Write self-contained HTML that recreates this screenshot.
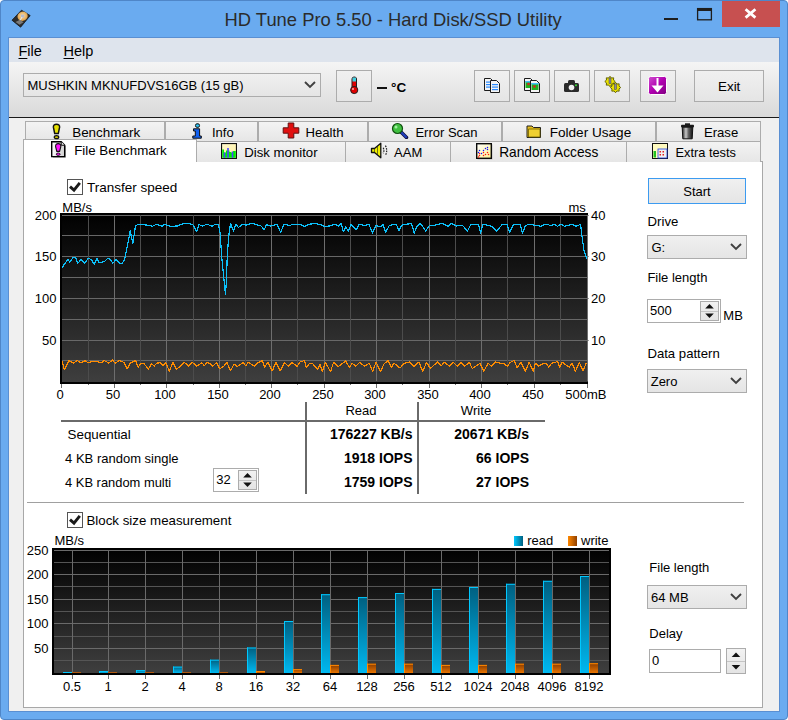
<!DOCTYPE html><html><head><meta charset="utf-8"><style>
html,body{margin:0;padding:0;}
body{width:788px;height:720px;position:relative;overflow:hidden;background:#fff;font-family:"Liberation Sans", sans-serif;}
u{text-decoration:underline;text-underline-offset:2px;}
</style></head><body>
<div style="position:absolute;left:0;top:0;width:786px;height:718px;background:#6aabf0;border:1px solid #4f86c8;border-radius:4px;"></div><div style="position:absolute;left:8px;top:37px;width:772px;height:675px;background:#5a8fd2;"></div><div style="position:absolute;left:9px;top:38px;width:770px;height:673px;background:#f0f0f0;"></div><div style="position:absolute;top:11px;font-size:18.4px;line-height:18.4px;color:#2b2b2b;white-space:nowrap;left:224.50px;">HD Tune Pro 5.50 - Hard Disk/SSD Utility</div><div style="position:absolute;left:722px;top:1px;width:58px;height:26px;background:#c75050;"></div><svg style="position:absolute;left:722px;top:1px;" width="58" height="26" viewBox="0 0 58 26"><path d="M23.6 8.2 L33.4 16.6 M33.4 8.2 L23.6 16.6" stroke="#fff" stroke-width="2.8" stroke-linecap="butt"/></svg><div style="position:absolute;left:664px;top:18px;width:14px;height:2px;background:#1e1e1e;"></div><svg style="position:absolute;left:696px;top:7px;" width="18" height="14" viewBox="0 0 18 14"><rect x="1.6" y="1.6" width="13.8" height="11.2" fill="none" stroke="#1e1e1e" stroke-width="1.3"/><rect x="1" y="1" width="15" height="3" fill="#1e1e1e"/></svg><svg style="position:absolute;left:0px;top:0px;" width="40" height="37" viewBox="0 0 40 37"><defs><radialGradient id="pl" cx="0.5" cy="0.45" r="0.6"><stop offset="0" stop-color="#ffe0a8"/><stop offset="1" stop-color="#d89840"/></radialGradient></defs>
<polygon points="12,20.2 21.5,10.2 30.2,15.6 20.6,27.2" fill="#2c2c2c" stroke="#151515" stroke-width="0.8"/>
<ellipse cx="22.6" cy="16.2" rx="5.2" ry="4.6" transform="rotate(-20 22.6 16.2)" fill="url(#pl)"/>
<rect x="21" y="14.6" width="3.2" height="3" fill="#b8bccc"/>
<path d="M22 17 L19.4 21.8" stroke="#e8e8e8" stroke-width="1.1"/>
<path d="M15.5 22 L20 19.8 L23.5 22.3 L19.5 24.8 Z" fill="#7a7a7a"/></svg><div style="position:absolute;left:9px;top:38px;width:770px;height:24px;background:#dee4ed;"></div><div style="position:absolute;top:44px;font-size:14.5px;line-height:14.5px;color:#000;white-space:nowrap;left:18.50px;"><u>F</u>ile</div><div style="position:absolute;top:44px;font-size:14.5px;line-height:14.5px;color:#000;white-space:nowrap;left:63.50px;"><u>H</u>elp</div><div style="position:absolute;left:9px;top:62px;width:770px;height:55px;background:linear-gradient(#f5f5f5,#d9d9d9);"></div><div style="position:absolute;left:9px;top:117px;width:770px;height:1px;background:#1a1a1a;"></div><div style="position:absolute;left:23px;top:73px;width:298px;height:24px;box-sizing:border-box;border:1px solid #acacac;background:linear-gradient(#f0f0f0,#e5e5e5);"></div><div style="position:absolute;top:79px;font-size:13px;line-height:13px;color:#000;white-space:nowrap;left:27.50px;">MUSHKIN MKNUFDVS16GB (15 gB)</div><svg style="position:absolute;left:304px;top:80.0px;" width="12" height="10" viewBox="0 0 12 10"><path d="M1 2 L6 7 L11 2" fill="none" stroke="#404040" stroke-width="1.9"/></svg><div style="position:absolute;left:336px;top:70px;width:36px;height:32px;box-sizing:border-box;border:1px solid #acacac;background:linear-gradient(#f0f0f0,#e5e5e5);"></div><svg style="position:absolute;left:349px;top:76px;" width="10" height="19" viewBox="0 0 10 19"><rect x="3" y="1" width="4.5" height="12" rx="2" fill="#e00000" stroke="#202020" stroke-width="1"/>
<rect x="3.5" y="1.5" width="3.5" height="4" fill="#40d0e0"/>
<circle cx="5.2" cy="14" r="3.6" fill="#e00000" stroke="#202020" stroke-width="1"/><circle cx="4" cy="13" r="1" fill="#ffb0b0"/></svg><div style="position:absolute;left:377px;top:87px;width:10px;height:2px;background:#111;"></div><div style="position:absolute;top:81px;font-size:13.5px;line-height:13.5px;color:#000;white-space:nowrap;font-weight:bold;left:391.00px;">&deg;C</div><div style="position:absolute;left:474px;top:70px;width:36px;height:32px;box-sizing:border-box;border:1px solid #acacac;background:linear-gradient(#f0f0f0,#e5e5e5);"></div><div style="position:absolute;left:514px;top:70px;width:36px;height:32px;box-sizing:border-box;border:1px solid #acacac;background:linear-gradient(#f0f0f0,#e5e5e5);"></div><div style="position:absolute;left:554px;top:70px;width:36px;height:32px;box-sizing:border-box;border:1px solid #acacac;background:linear-gradient(#f0f0f0,#e5e5e5);"></div><div style="position:absolute;left:594px;top:70px;width:36px;height:32px;box-sizing:border-box;border:1px solid #acacac;background:linear-gradient(#f0f0f0,#e5e5e5);"></div><div style="position:absolute;left:640px;top:70px;width:36px;height:32px;box-sizing:border-box;border:1px solid #acacac;background:linear-gradient(#f0f0f0,#e5e5e5);"></div><div style="position:absolute;left:694px;top:70px;width:70px;height:32px;box-sizing:border-box;border:1px solid #acacac;background:linear-gradient(#f0f0f0,#e5e5e5);"></div><div style="position:absolute;top:80px;font-size:13.4px;line-height:13.4px;color:#000;white-space:nowrap;left:529.20px;width:400px;text-align:center;">Exit</div><svg style="position:absolute;left:483px;top:77px;" width="18" height="17" viewBox="0 0 18 17"><g transform="translate(1,1)"><path d="M0.5 0.5 H6.5 L9.5 3.5 V12.5 H0.5 Z" fill="#f4f4f4" stroke="#1a1a1a"/><rect x="2" y="3.5" width="5" height="1.2" fill="#2a8aff"/><rect x="2" y="6" width="5" height="1.2" fill="#2a8aff"/><rect x="2" y="8.5" width="5" height="1.2" fill="#2a8aff"/></g><g transform="translate(7,3)"><path d="M0.5 0.5 H6.5 L9.5 3.5 V12.5 H0.5 Z" fill="#f4f4f4" stroke="#1a1a1a"/><rect x="2" y="4" width="6" height="1.2" fill="#2a8aff"/><rect x="2" y="6.5" width="6" height="1.2" fill="#2a8aff"/><rect x="2" y="9" width="6" height="1.2" fill="#2a8aff"/></g></svg><svg style="position:absolute;left:523px;top:77px;" width="18" height="17" viewBox="0 0 18 17"><g transform="translate(1,1)"><path d="M0.5 0.5 H6.5 L9.5 3.5 V12.5 H0.5 Z" fill="#f4f4f4" stroke="#1a1a1a"/><rect x="1.5" y="3" width="6" height="7" fill="#20b020"/><rect x="1.5" y="3" width="6" height="1.5" fill="#40c0ff"/><circle cx="4.5" cy="6" r="1.3" fill="#e02020"/></g><g transform="translate(7,3)"><path d="M0.5 0.5 H6.5 L9.5 3.5 V12.5 H0.5 Z" fill="#f4f4f4" stroke="#1a1a1a"/><rect x="1.5" y="3" width="7" height="7" fill="#20b020"/><rect x="1.5" y="3" width="7" height="1.5" fill="#40c0ff"/><circle cx="4.5" cy="6.5" r="1.3" fill="#e02020"/></g></svg><svg style="position:absolute;left:563px;top:78px;" width="18" height="16" viewBox="0 0 18 16"><rect x="1" y="5" width="15" height="9" rx="1.5" fill="#2a2a2a"/><rect x="5" y="2" width="7" height="4" rx="1.5" fill="#2a2a2a"/><circle cx="8.5" cy="9.5" r="2.8" fill="#f0f0f0"/><circle cx="13" cy="7.2" r="1" fill="#30e030"/></svg><svg style="position:absolute;left:603px;top:75px;" width="20" height="20" viewBox="0 0 20 20"><g fill="#e8e000" stroke="#5a5a00" stroke-width="0.9"><polygon points="12.20,6.50 10.51,7.95 10.68,10.18 8.45,10.01 7.00,11.70 5.55,10.01 3.32,10.18 3.49,7.95 1.80,6.50 3.49,5.05 3.32,2.82 5.55,2.99 7.00,1.30 8.45,2.99 10.68,2.82 10.51,5.05"/><polygon points="17.70,12.50 16.01,13.95 16.18,16.18 13.95,16.01 12.50,17.70 11.05,16.01 8.82,16.18 8.99,13.95 7.30,12.50 8.99,11.05 8.82,8.82 11.05,8.99 12.50,7.30 13.95,8.99 16.18,8.82 16.01,11.05"/></g><rect x="6" y="3" width="2" height="5.5" fill="#8a8aa0" stroke="#444" stroke-width="0.5"/><rect x="11.5" y="9" width="2" height="5.5" fill="#8a8aa0" stroke="#444" stroke-width="0.5"/></svg><svg style="position:absolute;left:647.5px;top:75.5px;" width="19" height="19" viewBox="0 0 19 19"><defs><linearGradient id="pg" x1="0" y1="0" x2="1" y2="1"><stop offset="0" stop-color="#d050d0"/><stop offset="0.5" stop-color="#b000b0"/><stop offset="1" stop-color="#800080"/></linearGradient></defs>
<rect x="0.5" y="0.5" width="18" height="18" rx="2" fill="url(#pg)" stroke="#fff" stroke-width="1"/><rect x="8.5" y="2" width="2" height="11" fill="#fff"/><path d="M3.5 9.5 H15.5 L9.5 16.5 Z" fill="#fff"/></svg><div style="position:absolute;left:25px;top:121px;width:140px;height:20px;box-sizing:border-box;border:1px solid #acacac;border-bottom:none;background:linear-gradient(#f3f3f3,#e6e6e6);"></div><div style="position:absolute;top:126px;font-size:13.44px;line-height:13.44px;color:#000;white-space:nowrap;left:72.20px;">Benchmark</div><div style="position:absolute;left:165px;top:121px;width:93px;height:20px;box-sizing:border-box;border:1px solid #acacac;border-bottom:none;background:linear-gradient(#f3f3f3,#e6e6e6);"></div><div style="position:absolute;top:126px;font-size:13px;line-height:13px;color:#000;white-space:nowrap;left:212.00px;">Info</div><div style="position:absolute;left:258px;top:121px;width:110px;height:20px;box-sizing:border-box;border:1px solid #acacac;border-bottom:none;background:linear-gradient(#f3f3f3,#e6e6e6);"></div><div style="position:absolute;top:126px;font-size:13.14px;line-height:13.14px;color:#000;white-space:nowrap;left:305.50px;">Health</div><div style="position:absolute;left:368px;top:121px;width:134px;height:20px;box-sizing:border-box;border:1px solid #acacac;border-bottom:none;background:linear-gradient(#f3f3f3,#e6e6e6);"></div><div style="position:absolute;top:126px;font-size:13.0px;line-height:13.0px;color:#000;white-space:nowrap;left:415.40px;">Error Scan</div><div style="position:absolute;left:502px;top:121px;width:154px;height:20px;box-sizing:border-box;border:1px solid #acacac;border-bottom:none;background:linear-gradient(#f3f3f3,#e6e6e6);"></div><div style="position:absolute;top:126px;font-size:13.59px;line-height:13.59px;color:#000;white-space:nowrap;left:549.70px;">Folder Usage</div><div style="position:absolute;left:656px;top:121px;width:105px;height:20px;box-sizing:border-box;border:1px solid #acacac;border-bottom:none;background:linear-gradient(#f3f3f3,#e6e6e6);"></div><div style="position:absolute;top:126px;font-size:13.13px;line-height:13.13px;color:#000;white-space:nowrap;left:703.90px;">Erase</div><div style="position:absolute;left:23px;top:161px;width:740px;height:547px;box-sizing:border-box;border:1px solid #a8a8a8;background:#fff;"></div><div style="position:absolute;left:196px;top:141px;width:150px;height:21px;box-sizing:border-box;border:1px solid #acacac;border-bottom:none;background:linear-gradient(#f3f3f3,#e6e6e6);"></div><div style="position:absolute;top:146px;font-size:13.19px;line-height:13.19px;color:#000;white-space:nowrap;left:244.30px;">Disk monitor</div><div style="position:absolute;left:345px;top:141px;width:106px;height:21px;box-sizing:border-box;border:1px solid #acacac;border-bottom:none;background:linear-gradient(#f3f3f3,#e6e6e6);"></div><div style="position:absolute;top:146px;font-size:13.0px;line-height:13.0px;color:#000;white-space:nowrap;left:394.10px;">AAM</div><div style="position:absolute;left:450px;top:141px;width:177px;height:21px;box-sizing:border-box;border:1px solid #acacac;border-bottom:none;background:linear-gradient(#f3f3f3,#e6e6e6);"></div><div style="position:absolute;top:146px;font-size:13.73px;line-height:13.73px;color:#000;white-space:nowrap;left:499.20px;">Random Access</div><div style="position:absolute;left:626px;top:141px;width:135px;height:21px;box-sizing:border-box;border:1px solid #acacac;border-bottom:none;background:linear-gradient(#f3f3f3,#e6e6e6);"></div><div style="position:absolute;top:147px;font-size:12.8px;line-height:12.8px;color:#000;white-space:nowrap;left:675.50px;">Extra tests</div><div style="position:absolute;left:23px;top:139px;width:174px;height:23px;box-sizing:border-box;border:1px solid #acacac;border-bottom:none;background:#fff;"></div><div style="position:absolute;top:144px;font-size:13.34px;line-height:13.34px;color:#000;white-space:nowrap;left:74.20px;">File Benchmark</div><svg style="position:absolute;left:52px;top:122.5px;" width="9" height="17" viewBox="0 0 9 17"><path d="M4.5 1.2 C2.4 1.2 1.2 2.3 1.4 4.2 L2.7 10.6 H6.3 L7.6 4.2 C7.8 2.3 6.6 1.2 4.5 1.2 Z" fill="#e6e000" stroke="#111" stroke-width="1.5"/><ellipse cx="4.5" cy="14.2" rx="2.2" ry="1.5" fill="#c8c000" stroke="#111" stroke-width="1.3"/></svg><svg style="position:absolute;left:192px;top:123px;" width="10" height="16" viewBox="0 0 10 16"><rect x="3.5" y="0.8" width="4" height="3.5" rx="1.5" fill="#30c8f8" stroke="#111" stroke-width="1"/><path d="M1.5 5.8 H7.6 V13 H9.3 V15.2 H0.8 V13 H3.3 V8 H1.5 Z" fill="#1060f0" stroke="#111" stroke-width="1"/></svg><svg style="position:absolute;left:282px;top:122px;" width="18" height="17" viewBox="0 0 18 17"><path d="M6.2 1 H11.8 V5.8 H16.8 V11.2 H11.8 V16 H6.2 V11.2 H1.2 V5.8 H6.2 Z" fill="#e01010" stroke="#601010" stroke-width="1"/></svg><svg style="position:absolute;left:391px;top:122px;" width="18" height="17" viewBox="0 0 18 17"><path d="M10 10 L15.5 15.5" stroke="#101040" stroke-width="3.5" stroke-linecap="round"/><path d="M10 10 L15 15" stroke="#2040c0" stroke-width="2" stroke-linecap="round"/><circle cx="6.5" cy="6.5" r="5" fill="#40c040" stroke="#105010" stroke-width="1.2"/><circle cx="5" cy="5" r="1.5" fill="#a0f0a0"/></svg><svg style="position:absolute;left:526px;top:123px;" width="16" height="16" viewBox="0 0 16 16"><path d="M1 3 H6 L7.5 4.5 H14.5 V14.5 H1 Z" fill="#e8c020" stroke="#202020" stroke-width="1"/><path d="M2.5 6 H14 V14 H2.5 Z" fill="#f0d030" stroke="#706000" stroke-width="0.8"/></svg><svg style="position:absolute;left:680px;top:123px;" width="15" height="17" viewBox="0 0 15 17"><defs><linearGradient id="tg" x1="0" y1="0" x2="1" y2="0"><stop offset="0" stop-color="#202020"/><stop offset="0.35" stop-color="#c8c8c8"/><stop offset="0.6" stop-color="#606060"/><stop offset="1" stop-color="#101010"/></linearGradient></defs><rect x="1" y="1.8" width="13" height="2.6" rx="0.8" fill="#1a1a1a"/><rect x="5" y="0.3" width="5" height="2" fill="#1a1a1a"/><path d="M2.2 4.2 H12.8 L12.2 15.8 H2.8 Z" fill="url(#tg)" stroke="#111" stroke-width="1"/></svg><svg style="position:absolute;left:50px;top:140px;" width="17" height="19" viewBox="0 0 17 19"><defs><linearGradient id="dg" x1="0" y1="0" x2="1" y2="0"><stop offset="0" stop-color="#fcfcfc"/><stop offset="1" stop-color="#d0d0d0"/></linearGradient></defs><path d="M2.8 2.8 H12.3 L15.8 6.3 V17.8 H2.8 Z" fill="#000" opacity="0.35"/><path d="M1.7 1.7 H11.2 L14.7 5.2 V16.6 H1.7 Z" fill="url(#dg)" stroke="#000" stroke-width="1.4" stroke-linejoin="miter"/><path d="M11.2 1.7 V5.2 H14.7" fill="#fff" stroke="#000" stroke-width="1"/><path d="M8.2 3.6 C6.4 3.6 5.5 4.8 5.6 6.6 L6.8 11.4 H9.6 L10.8 6.6 C10.9 4.8 10 3.6 8.2 3.6 Z" fill="#ff10ff" stroke="#111" stroke-width="1.1"/><ellipse cx="8.2" cy="14.2" rx="1.9" ry="1.2" fill="#ff10ff" stroke="#111" stroke-width="0.9"/></svg><svg style="position:absolute;left:221px;top:143px;" width="16" height="16" viewBox="0 0 16 16"><defs><linearGradient id="yb" x1="0" y1="0" x2="1" y2="1"><stop offset="0" stop-color="#fffad0"/><stop offset="1" stop-color="#fff0a0"/></linearGradient></defs><rect x="0.5" y="0.5" width="15" height="15" fill="url(#yb)" stroke="#111" stroke-width="1.2"/><path d="M1.2 14.8 V6.5 H3 V9.5 H5 V7.5 H8.5 V9 H10 V14.8 Z" fill="#00f000"/><path d="M10 14.8 V9.5 H12 V8 H14.8 V14.8 Z" fill="#00f000"/><path d="M3.5 14.8 V9.5 M7 14.8 V5 M11.5 14.8 V8.5" stroke="#4848ff" stroke-width="1.6"/></svg><svg style="position:absolute;left:370px;top:142px;" width="19" height="17" viewBox="0 0 19 17"><path d="M1.5 6.5 H4.5 L10.8 1.2 V15.8 L4.5 10.5 H1.5 Z" fill="#f0f000" stroke="#111" stroke-width="1.3" stroke-linejoin="round"/><path d="M4.5 6.5 V10.5 M7.5 4 V13" stroke="#222" stroke-width="0.6"/><path d="M13.2 5.8 Q14.6 8.5 13.2 11.2 M15.4 3.6 Q18 8.5 15.4 13.4" fill="none" stroke="#222" stroke-width="1.2" stroke-dasharray="1.6 1"/></svg><svg style="position:absolute;left:476px;top:143px;" width="17" height="17" viewBox="0 0 17 17"><defs><linearGradient id="ry" x1="0" y1="0" x2="1" y2="1"><stop offset="0" stop-color="#ffffff"/><stop offset="1" stop-color="#fff490"/></linearGradient></defs><rect x="1.4" y="1.4" width="15" height="15" fill="#777" opacity="0.5"/><rect x="0.7" y="0.7" width="14.6" height="14.6" fill="url(#ry)" stroke="#0a0a0a" stroke-width="1.4"/><circle cx="3.5" cy="7.5" r="0.75" fill="#1010ff"/><circle cx="2.5" cy="9.5" r="0.75" fill="#1010ff"/><circle cx="5.5" cy="10.5" r="0.75" fill="#1010ff"/><circle cx="7.5" cy="7.5" r="0.75" fill="#1010ff"/><circle cx="9.5" cy="5.5" r="0.75" fill="#1010ff"/><circle cx="11.5" cy="4.5" r="0.75" fill="#1010ff"/><circle cx="11.5" cy="6.5" r="0.75" fill="#1010ff"/><circle cx="3.5" cy="10.5" r="0.75" fill="#ff1010"/><circle cx="3.5" cy="12.5" r="0.75" fill="#ff1010"/><circle cx="7.5" cy="9.5" r="0.75" fill="#ff1010"/><circle cx="11.5" cy="9.5" r="0.75" fill="#ff1010"/><circle cx="9.5" cy="11.5" r="0.75" fill="#ff1010"/><circle cx="12.5" cy="11.5" r="0.75" fill="#ff1010"/><circle cx="7.5" cy="12.5" r="0.75" fill="#ff1010"/><circle cx="2.5" cy="14" r="0.75" fill="#ff1010"/></svg><svg style="position:absolute;left:652px;top:143px;" width="16" height="16" viewBox="0 0 16 16"><rect x="0.5" y="0.5" width="15" height="15" fill="#fffac0" stroke="#111" stroke-width="1"/><path d="M1.5 14.5 V8 H4 V14.5 Z" fill="#20c020"/><rect x="6" y="6" width="9" height="9" fill="#f0f0f0" stroke="#2040e0" stroke-width="0.8"/><g fill="#e02020"><rect x="7.5" y="8" width="1.5" height="1.5"/><rect x="10.5" y="8" width="1.5" height="1.5"/><rect x="7.5" y="11" width="1.5" height="1.5"/><rect x="10.5" y="11" width="1.5" height="1.5"/></g></svg><div style="position:absolute;left:67px;top:179px;width:16px;height:16px;box-sizing:border-box;border:1px solid #555;background:#fff;"></div><svg style="position:absolute;left:67px;top:179px;" width="16" height="16" viewBox="0 0 16 16"><path d="M3 7.6 L7 11.2 L12.8 3.8" fill="none" stroke="#1a1a1a" stroke-width="2.9"/></svg><div style="position:absolute;top:181px;font-size:13.5px;line-height:13.5px;color:#000;white-space:nowrap;left:86.90px;">Transfer speed</div><svg style="position:absolute;left:60px;top:213px;" width="534" height="176" viewBox="0 0 534 176"><defs><linearGradient id="bg1" x1="0" y1="0" x2="0" y2="1"><stop offset="0" stop-color="#000"/><stop offset="1" stop-color="#3f3f3f"/></linearGradient></defs><rect x="0" y="0" width="528" height="171" fill="url(#bg1)"/><rect x="2" y="2" width="526" height="1" fill="#686868"/><rect x="2" y="22" width="526" height="1" fill="#686868"/><rect x="2" y="43" width="526" height="1" fill="#686868"/><rect x="2" y="64" width="526" height="1" fill="#686868"/><rect x="2" y="85" width="526" height="1" fill="#686868"/><rect x="2" y="106" width="526" height="1" fill="#686868"/><rect x="2" y="127" width="526" height="1" fill="#686868"/><rect x="2" y="147" width="526" height="1" fill="#686868"/><rect x="1" y="2" width="1" height="166" fill="#6e6e6e"/><rect x="28" y="2" width="1" height="166" fill="#4c4c4c"/><rect x="54" y="2" width="1" height="166" fill="#6e6e6e"/><rect x="80" y="2" width="1" height="166" fill="#4c4c4c"/><rect x="106" y="2" width="1" height="166" fill="#6e6e6e"/><rect x="133" y="2" width="1" height="166" fill="#4c4c4c"/><rect x="159" y="2" width="1" height="166" fill="#6e6e6e"/><rect x="185" y="2" width="1" height="166" fill="#4c4c4c"/><rect x="211" y="2" width="1" height="166" fill="#6e6e6e"/><rect x="237" y="2" width="1" height="166" fill="#4c4c4c"/><rect x="264" y="2" width="1" height="166" fill="#6e6e6e"/><rect x="290" y="2" width="1" height="166" fill="#4c4c4c"/><rect x="316" y="2" width="1" height="166" fill="#6e6e6e"/><rect x="342" y="2" width="1" height="166" fill="#4c4c4c"/><rect x="369" y="2" width="1" height="166" fill="#6e6e6e"/><rect x="395" y="2" width="1" height="166" fill="#4c4c4c"/><rect x="421" y="2" width="1" height="166" fill="#6e6e6e"/><rect x="447" y="2" width="1" height="166" fill="#4c4c4c"/><rect x="474" y="2" width="1" height="166" fill="#6e6e6e"/><rect x="500" y="2" width="1" height="166" fill="#4c4c4c"/><rect x="527" y="2" width="1" height="166" fill="#6e6e6e"/><rect x="0" y="0" width="528" height="2" fill="#000"/><rect x="0" y="0" width="2" height="171" fill="#000"/><rect x="0" y="169" width="528" height="2" fill="#000"/><rect x="1" y="171" width="1" height="4" fill="#707070"/><rect x="28" y="171" width="1" height="1" fill="#707070"/><rect x="54" y="171" width="1" height="4" fill="#707070"/><rect x="80" y="171" width="1" height="1" fill="#707070"/><rect x="106" y="171" width="1" height="4" fill="#707070"/><rect x="133" y="171" width="1" height="1" fill="#707070"/><rect x="159" y="171" width="1" height="4" fill="#707070"/><rect x="185" y="171" width="1" height="1" fill="#707070"/><rect x="211" y="171" width="1" height="4" fill="#707070"/><rect x="237" y="171" width="1" height="1" fill="#707070"/><rect x="264" y="171" width="1" height="4" fill="#707070"/><rect x="290" y="171" width="1" height="1" fill="#707070"/><rect x="316" y="171" width="1" height="4" fill="#707070"/><rect x="342" y="171" width="1" height="1" fill="#707070"/><rect x="369" y="171" width="1" height="4" fill="#707070"/><rect x="395" y="171" width="1" height="1" fill="#707070"/><rect x="421" y="171" width="1" height="4" fill="#707070"/><rect x="447" y="171" width="1" height="1" fill="#707070"/><rect x="474" y="171" width="1" height="4" fill="#707070"/><rect x="500" y="171" width="1" height="1" fill="#707070"/><rect x="527" y="171" width="1" height="4" fill="#707070"/><rect x="-1" y="2" width="1" height="1" fill="#808080"/><rect x="528" y="2" width="1" height="1" fill="#a0a0a0"/><rect x="-1" y="43" width="1" height="1" fill="#808080"/><rect x="528" y="43" width="1" height="1" fill="#a0a0a0"/><rect x="-1" y="85" width="1" height="1" fill="#808080"/><rect x="528" y="85" width="1" height="1" fill="#a0a0a0"/><rect x="-1" y="127" width="1" height="1" fill="#808080"/><rect x="528" y="127" width="1" height="1" fill="#a0a0a0"/><polyline points="2.1,148.3 4.4,156.9 8.9,147.6 13.3,150.1 17.4,147.6 21.0,150.1 24.9,147.6 28.4,149.8 32.9,148.3 41.7,149.4 44.4,147.6 48.9,150.1 52.4,147.1 55.1,150.1 59.5,147.6 64.0,149.4 67.2,156.0 70.2,150.1 75.5,147.6 78.2,154.2 80.8,150.1 83.5,150.1 88.5,156.0 91.5,150.7 94.2,153.0 96.8,150.1 100.4,149.8 103.0,153.0 105.7,149.4 109.3,158.3 112.8,149.4 116.4,156.0 120.8,153.0 124.4,149.4 128.8,153.0 132.3,149.4 136.8,153.0 141.9,149.7 144.4,152.9 147.0,149.4 149.5,150.3 152.7,153.2 156.5,149.4 159.7,155.8 163.5,153.5 166.9,149.4 170.5,157.9 174.0,151.0 177.4,153.5 183.1,149.4 185.7,152.9 188.2,149.4 194.6,153.2 198.4,149.4 202.2,147.8 204.7,154.1 207.9,149.4 212.3,157.9 215.9,149.4 220.2,157.9 224.4,149.4 228.2,153.2 232.0,149.4 237.1,153.2 240.0,148.9 244.4,147.6 246.3,154.5 249.5,150.2 252.1,150.2 257.8,156.1 260.0,151.1 262.2,158.7 265.4,149.2 270.5,158.7 273.6,149.2 278.1,153.6 285.7,147.9 289.5,154.5 292.0,150.2 295.8,153.2 299.6,149.4 304.7,153.2 309.2,150.2 312.6,158.3 316.1,149.2 320.6,158.7 323.8,151.1 328.2,147.6 331.4,154.5 333.9,150.2 340.0,154.9 344.4,150.4 349.5,148.9 354.0,153.2 359.0,148.9 362.6,158.3 366.6,149.4 370.5,155.5 377.4,148.9 381.2,152.7 384.4,149.4 389.5,153.2 393.3,149.2 397.1,153.2 400.9,149.4 404.7,153.2 409.2,149.2 412.3,155.5 419.9,150.4 423.8,158.0 428.2,150.2 431.4,153.2 435.2,148.9 440.0,150.2 443.8,150.7 447.6,153.2 450.2,149.4 454.0,147.6 457.1,154.5 460.9,149.4 465.4,158.3 469.2,149.2 473.2,158.3 475.5,150.2 478.7,153.2 483.1,150.7 486.3,150.7 488.9,154.2 491.4,150.4 497.7,148.5 499.6,154.2 502.2,149.2 509.2,154.2 512.1,150.4 515.5,158.3 519.3,149.4 523.1,158.0 526.3,149.8" fill="none" stroke="#ff8c00" stroke-width="1.2" stroke-linejoin="round" shape-rendering="optimizeSpeed"/><polyline points="2.1,54.7 4.4,51.2 8.0,46.4 9.8,49.4 12.8,44.6 15.6,44.6 17.8,50.3 21.3,46.4 24.9,50.3 28.1,45.3 31.6,46.7 34.1,51.2 37.0,45.3 39.1,49.9 44.4,48.5 47.6,45.3 49.7,45.9 52.9,50.3 56.0,46.4 59.5,50.3 62.2,50.3 64.8,45.9 67.5,32.5 70.2,18.0 72.8,30.8 75.5,12.6 79.1,11.2 87.0,12.1 92.4,13.3 96.8,11.2 102.1,13.3 104.8,11.2 110.1,13.3 117.2,13.0 120.8,11.2 128.8,10.3 133.2,12.1 136.6,18.5 138.9,11.6 142.4,13.0 146.9,11.2 152.2,13.3 154.9,11.2 158.4,11.6 160.2,20.1 161.6,43.2 163.8,64.5 165.5,81.4 166.4,68.1 167.3,41.4 168.7,23.6 170.5,10.3 173.5,18.3 175.8,11.2 178.3,14.4 182.4,11.6 186.8,12.1 191.3,10.3 196.6,11.6 201.1,13.0 204.3,16.9 206.4,11.6 210.8,13.0 217.0,11.2 220.6,19.2 224.2,11.2 229.5,12.6 233.0,11.2 240.1,11.6 244.6,13.3 248.1,11.6 254.4,10.3 261.5,12.1 264.1,13.3 269.8,13.0 274.2,11.2 278.7,13.0 281.3,10.3 283.4,18.7 285.8,13.9 288.4,18.3 291.1,11.2 296.4,16.9 299.1,11.2 304.4,12.6 308.9,11.2 312.4,20.1 316.0,12.6 320.4,13.9 323.1,11.6 325.7,19.2 329.3,12.6 333.7,11.2 336.4,11.6 339.0,18.0 341.7,12.1 347.0,11.2 351.5,10.3 354.2,20.1 356.8,13.9 360.4,10.3 365.7,18.0 369.3,12.6 375.5,12.1 381.7,10.3 387.9,13.3 391.5,10.3 396.2,13.0 402.4,12.1 407.4,18.3 411.0,11.2 414.9,11.6 418.4,11.2 420.6,20.1 422.9,11.2 427.3,12.1 431.7,13.3 436.5,18.3 442.4,11.2 446.8,11.2 449.5,19.2 453.1,12.1 458.4,11.2 460.2,11.2 462.5,20.1 465.5,12.6 469.1,11.2 474.4,12.1 480.6,13.3 485.9,11.2 491.3,12.6 493.9,11.2 497.5,13.3 501.0,11.2 504.6,13.3 509.0,12.1 512.6,11.6 516.1,13.3 520.6,11.2 521.5,20.1 524.1,37.9 526.8,45.9" fill="none" stroke="#0cc0fa" stroke-width="1.2" stroke-linejoin="round" shape-rendering="optimizeSpeed"/></svg><div style="position:absolute;top:201px;font-size:13px;line-height:13px;color:#000;white-space:nowrap;left:62.30px;">MB/s</div><div style="position:absolute;top:201px;font-size:13px;line-height:13px;color:#000;white-space:nowrap;left:568.50px;">ms</div><div style="position:absolute;top:209px;font-size:13px;line-height:13px;color:#000;white-space:nowrap;left:-343.50px;width:400px;text-align:right;">200</div><div style="position:absolute;top:250px;font-size:13px;line-height:13px;color:#000;white-space:nowrap;left:-343.50px;width:400px;text-align:right;">150</div><div style="position:absolute;top:292px;font-size:13px;line-height:13px;color:#000;white-space:nowrap;left:-343.50px;width:400px;text-align:right;">100</div><div style="position:absolute;top:334px;font-size:13px;line-height:13px;color:#000;white-space:nowrap;left:-343.50px;width:400px;text-align:right;">50</div><div style="position:absolute;top:209px;font-size:13px;line-height:13px;color:#000;white-space:nowrap;left:591.00px;">40</div><div style="position:absolute;top:250px;font-size:13px;line-height:13px;color:#000;white-space:nowrap;left:591.00px;">30</div><div style="position:absolute;top:292px;font-size:13px;line-height:13px;color:#000;white-space:nowrap;left:591.00px;">20</div><div style="position:absolute;top:334px;font-size:13px;line-height:13px;color:#000;white-space:nowrap;left:591.00px;">10</div><div style="position:absolute;top:388px;font-size:13px;line-height:13px;color:#000;white-space:nowrap;left:-140.00px;width:400px;text-align:center;">0</div><div style="position:absolute;top:388px;font-size:13px;line-height:13px;color:#000;white-space:nowrap;left:-87.00px;width:400px;text-align:center;">50</div><div style="position:absolute;top:388px;font-size:13px;line-height:13px;color:#000;white-space:nowrap;left:-35.00px;width:400px;text-align:center;">100</div><div style="position:absolute;top:388px;font-size:13px;line-height:13px;color:#000;white-space:nowrap;left:18.00px;width:400px;text-align:center;">150</div><div style="position:absolute;top:388px;font-size:13px;line-height:13px;color:#000;white-space:nowrap;left:70.00px;width:400px;text-align:center;">200</div><div style="position:absolute;top:388px;font-size:13px;line-height:13px;color:#000;white-space:nowrap;left:123.00px;width:400px;text-align:center;">250</div><div style="position:absolute;top:388px;font-size:13px;line-height:13px;color:#000;white-space:nowrap;left:175.00px;width:400px;text-align:center;">300</div><div style="position:absolute;top:388px;font-size:13px;line-height:13px;color:#000;white-space:nowrap;left:228.00px;width:400px;text-align:center;">350</div><div style="position:absolute;top:388px;font-size:13px;line-height:13px;color:#000;white-space:nowrap;left:280.00px;width:400px;text-align:center;">400</div><div style="position:absolute;top:388px;font-size:13px;line-height:13px;color:#000;white-space:nowrap;left:333.00px;width:400px;text-align:center;">450</div><div style="position:absolute;top:388px;font-size:13px;line-height:13px;color:#000;white-space:nowrap;left:565.20px;">500mB</div><div style="position:absolute;left:305px;top:402px;width:2px;height:92px;background:#6a6a6a;"></div><div style="position:absolute;left:417px;top:402px;width:2px;height:92px;background:#6a6a6a;"></div><div style="position:absolute;left:61px;top:420px;width:484px;height:2px;background:#6a6a6a;"></div><div style="position:absolute;top:404px;font-size:13px;line-height:13px;color:#000;white-space:nowrap;left:161.00px;width:400px;text-align:center;">Read</div><div style="position:absolute;top:404px;font-size:13.17px;line-height:13.17px;color:#000;white-space:nowrap;left:276.00px;width:400px;text-align:center;">Write</div><div style="position:absolute;top:428px;font-size:13.4px;line-height:13.4px;color:#000;white-space:nowrap;left:67.50px;">Sequential</div><div style="position:absolute;top:452px;font-size:13px;line-height:13px;color:#000;white-space:nowrap;left:65.10px;">4 KB random single</div><div style="position:absolute;top:477px;font-size:12.9px;line-height:12.9px;color:#000;white-space:nowrap;left:65.10px;">4 KB random multi</div><div style="position:absolute;top:427px;font-size:14px;line-height:14px;color:#000;white-space:nowrap;font-weight:bold;left:12.50px;width:400px;text-align:right;">176227 KB/s</div><div style="position:absolute;top:451px;font-size:14px;line-height:14px;color:#000;white-space:nowrap;font-weight:bold;left:12.50px;width:400px;text-align:right;">1918 IOPS</div><div style="position:absolute;top:475px;font-size:14px;line-height:14px;color:#000;white-space:nowrap;font-weight:bold;left:12.50px;width:400px;text-align:right;">1759 IOPS</div><div style="position:absolute;top:427px;font-size:14px;line-height:14px;color:#000;white-space:nowrap;font-weight:bold;left:129.00px;width:400px;text-align:right;">20671 KB/s</div><div style="position:absolute;top:451px;font-size:14px;line-height:14px;color:#000;white-space:nowrap;font-weight:bold;left:129.00px;width:400px;text-align:right;">66 IOPS</div><div style="position:absolute;top:475px;font-size:14px;line-height:14px;color:#000;white-space:nowrap;font-weight:bold;left:129.00px;width:400px;text-align:right;">27 IOPS</div><div style="position:absolute;left:213px;top:468px;width:46px;height:24px;box-sizing:border-box;border:1px solid #acacac;background:#fff;"></div><div style="position:absolute;top:473px;font-size:13px;line-height:13px;color:#000;white-space:nowrap;left:216.20px;">32</div><div style="position:absolute;left:238px;top:470px;width:19px;height:20px;box-sizing:border-box;border:1px solid #acacac;background:linear-gradient(#f2f2f2,#e4e4e4);"></div><div style="position:absolute;left:239px;top:479.5px;width:17px;height:1px;background:#c4c4c4;"></div><svg style="position:absolute;left:238px;top:470px;" width="19" height="20" viewBox="0 0 19 20"><path d="M5.2 7.5 L9.5 3.0 L13.8 7.5 Z" fill="#111"/><path d="M5.2 12.5 L9.5 17.0 L13.8 12.5 Z" fill="#111"/></svg><div style="position:absolute;left:27px;top:502px;width:717px;height:1px;background:#a0a0a0;"></div><div style="position:absolute;left:67px;top:512px;width:16px;height:16px;box-sizing:border-box;border:1px solid #555;background:#fff;"></div><svg style="position:absolute;left:67px;top:512px;" width="16" height="16" viewBox="0 0 16 16"><path d="M3 7.6 L7 11.2 L12.8 3.8" fill="none" stroke="#1a1a1a" stroke-width="2.9"/></svg><div style="position:absolute;top:514px;font-size:13.3px;line-height:13.3px;color:#000;white-space:nowrap;left:86.50px;">Block size measurement</div><svg style="position:absolute;left:52px;top:548px;" width="559" height="132" viewBox="0 0 559 132"><defs><linearGradient id="bg2" x1="0" y1="0" x2="0" y2="1"><stop offset="0" stop-color="#000"/><stop offset="1" stop-color="#404040"/></linearGradient><linearGradient id="rd" x1="0" y1="0" x2="0" y2="1"><stop offset="0" stop-color="#005f80"/><stop offset="1" stop-color="#00b8f0"/></linearGradient><linearGradient id="wr" x1="0" y1="0" x2="0" y2="1"><stop offset="0" stop-color="#8a3c00"/><stop offset="1" stop-color="#e87400"/></linearGradient></defs><rect x="0" y="0" width="559" height="127" fill="url(#bg2)"/><rect x="2" y="2" width="555" height="1" fill="#6a6a6a"/><rect x="2" y="14" width="555" height="1" fill="#555555"/><rect x="2" y="26" width="555" height="1" fill="#6a6a6a"/><rect x="2" y="38" width="555" height="1" fill="#555555"/><rect x="2" y="51" width="555" height="1" fill="#6a6a6a"/><rect x="2" y="63" width="555" height="1" fill="#555555"/><rect x="2" y="75" width="555" height="1" fill="#6a6a6a"/><rect x="2" y="88" width="555" height="1" fill="#555555"/><rect x="2" y="100" width="555" height="1" fill="#6a6a6a"/><rect x="2" y="112" width="555" height="1" fill="#555555"/><rect x="20" y="2" width="1" height="123" fill="#6a6a6a"/><rect x="56" y="2" width="1" height="123" fill="#6a6a6a"/><rect x="93" y="2" width="1" height="123" fill="#6a6a6a"/><rect x="130" y="2" width="1" height="123" fill="#6a6a6a"/><rect x="167" y="2" width="1" height="123" fill="#6a6a6a"/><rect x="204" y="2" width="1" height="123" fill="#6a6a6a"/><rect x="241" y="2" width="1" height="123" fill="#6a6a6a"/><rect x="278" y="2" width="1" height="123" fill="#6a6a6a"/><rect x="315" y="2" width="1" height="123" fill="#6a6a6a"/><rect x="352" y="2" width="1" height="123" fill="#6a6a6a"/><rect x="389" y="2" width="1" height="123" fill="#6a6a6a"/><rect x="426" y="2" width="1" height="123" fill="#6a6a6a"/><rect x="463" y="2" width="1" height="123" fill="#6a6a6a"/><rect x="500" y="2" width="1" height="123" fill="#6a6a6a"/><rect x="537" y="2" width="1" height="123" fill="#6a6a6a"/><rect x="0" y="0" width="559" height="2" fill="#000"/><rect x="0" y="0" width="2" height="127" fill="#000"/><rect x="557" y="0" width="2" height="127" fill="#000"/><rect x="0" y="125" width="559" height="2" fill="#000"/><rect x="11" y="124.0" width="9" height="1.0" fill="url(#rd)"/><rect x="11" y="124.0" width="1" height="1.0" fill="#00c8ff"/><rect x="11" y="124.0" width="9" height="1" fill="#00c8ff"/><rect x="20" y="124" width="9" height="1" fill="#b05a10"/><rect x="20" y="127" width="1" height="4" fill="#707070"/><rect x="47" y="123.0" width="9" height="2.0" fill="url(#rd)"/><rect x="47" y="123.0" width="1" height="2.0" fill="#00c8ff"/><rect x="47" y="123.0" width="9" height="1" fill="#00c8ff"/><rect x="56" y="124" width="9" height="1" fill="#b05a10"/><rect x="56" y="127" width="1" height="4" fill="#707070"/><rect x="84" y="122.1" width="9" height="2.9" fill="url(#rd)"/><rect x="84" y="122.1" width="1" height="2.9" fill="#00c8ff"/><rect x="84" y="122.1" width="9" height="1" fill="#00c8ff"/><rect x="93" y="124" width="9" height="1" fill="#b05a10"/><rect x="93" y="127" width="1" height="4" fill="#707070"/><rect x="121" y="118.6" width="9" height="6.4" fill="url(#rd)"/><rect x="121" y="118.6" width="1" height="6.4" fill="#00c8ff"/><rect x="121" y="118.6" width="9" height="1" fill="#00c8ff"/><rect x="130" y="124" width="9" height="1" fill="#b05a10"/><rect x="130" y="127" width="1" height="4" fill="#707070"/><rect x="158" y="111.7" width="9" height="13.3" fill="url(#rd)"/><rect x="158" y="111.7" width="1" height="13.3" fill="#00c8ff"/><rect x="158" y="111.7" width="9" height="1" fill="#00c8ff"/><rect x="167" y="124" width="9" height="1" fill="#b05a10"/><rect x="167" y="127" width="1" height="4" fill="#707070"/><rect x="195" y="99.5" width="9" height="25.5" fill="url(#rd)"/><rect x="195" y="99.5" width="1" height="25.5" fill="#00c8ff"/><rect x="195" y="99.5" width="9" height="1" fill="#00c8ff"/><rect x="204" y="123.0" width="9" height="2.0" fill="url(#wr)"/><rect x="204" y="123.0" width="1" height="2.0" fill="#ff8800"/><rect x="204" y="123.0" width="9" height="1" fill="#ff8800"/><rect x="204" y="127" width="1" height="4" fill="#707070"/><rect x="232" y="73.0" width="9" height="52.0" fill="url(#rd)"/><rect x="232" y="73.0" width="1" height="52.0" fill="#00c8ff"/><rect x="232" y="73.0" width="9" height="1" fill="#00c8ff"/><rect x="241" y="121.1" width="9" height="3.9" fill="url(#wr)"/><rect x="241" y="121.1" width="1" height="3.9" fill="#ff8800"/><rect x="241" y="121.1" width="9" height="1" fill="#ff8800"/><rect x="241" y="127" width="1" height="4" fill="#707070"/><rect x="269" y="46.2" width="9" height="78.8" fill="url(#rd)"/><rect x="269" y="46.2" width="1" height="78.8" fill="#00c8ff"/><rect x="269" y="46.2" width="9" height="1" fill="#00c8ff"/><rect x="278" y="116.9" width="9" height="8.1" fill="url(#wr)"/><rect x="278" y="116.9" width="1" height="8.1" fill="#ff8800"/><rect x="278" y="116.9" width="9" height="1" fill="#ff8800"/><rect x="278" y="127" width="1" height="4" fill="#707070"/><rect x="306" y="49.1" width="9" height="75.9" fill="url(#rd)"/><rect x="306" y="49.1" width="1" height="75.9" fill="#00c8ff"/><rect x="306" y="49.1" width="9" height="1" fill="#00c8ff"/><rect x="315" y="115.7" width="9" height="9.3" fill="url(#wr)"/><rect x="315" y="115.7" width="1" height="9.3" fill="#ff8800"/><rect x="315" y="115.7" width="9" height="1" fill="#ff8800"/><rect x="315" y="127" width="1" height="4" fill="#707070"/><rect x="343" y="45.0" width="9" height="80.0" fill="url(#rd)"/><rect x="343" y="45.0" width="1" height="80.0" fill="#00c8ff"/><rect x="343" y="45.0" width="9" height="1" fill="#00c8ff"/><rect x="352" y="115.7" width="9" height="9.3" fill="url(#wr)"/><rect x="352" y="115.7" width="1" height="9.3" fill="#ff8800"/><rect x="352" y="115.7" width="9" height="1" fill="#ff8800"/><rect x="352" y="127" width="1" height="4" fill="#707070"/><rect x="380" y="40.9" width="9" height="84.1" fill="url(#rd)"/><rect x="380" y="40.9" width="1" height="84.1" fill="#00c8ff"/><rect x="380" y="40.9" width="9" height="1" fill="#00c8ff"/><rect x="389" y="116.9" width="9" height="8.1" fill="url(#wr)"/><rect x="389" y="116.9" width="1" height="8.1" fill="#ff8800"/><rect x="389" y="116.9" width="9" height="1" fill="#ff8800"/><rect x="389" y="127" width="1" height="4" fill="#707070"/><rect x="417" y="39.0" width="9" height="86.0" fill="url(#rd)"/><rect x="417" y="39.0" width="1" height="86.0" fill="#00c8ff"/><rect x="417" y="39.0" width="9" height="1" fill="#00c8ff"/><rect x="426" y="116.9" width="9" height="8.1" fill="url(#wr)"/><rect x="426" y="116.9" width="1" height="8.1" fill="#ff8800"/><rect x="426" y="116.9" width="9" height="1" fill="#ff8800"/><rect x="426" y="127" width="1" height="4" fill="#707070"/><rect x="454" y="35.8" width="9" height="89.2" fill="url(#rd)"/><rect x="454" y="35.8" width="1" height="89.2" fill="#00c8ff"/><rect x="454" y="35.8" width="9" height="1" fill="#00c8ff"/><rect x="463" y="115.7" width="9" height="9.3" fill="url(#wr)"/><rect x="463" y="115.7" width="1" height="9.3" fill="#ff8800"/><rect x="463" y="115.7" width="9" height="1" fill="#ff8800"/><rect x="463" y="127" width="1" height="4" fill="#707070"/><rect x="491" y="32.8" width="9" height="92.2" fill="url(#rd)"/><rect x="491" y="32.8" width="1" height="92.2" fill="#00c8ff"/><rect x="491" y="32.8" width="9" height="1" fill="#00c8ff"/><rect x="500" y="115.7" width="9" height="9.3" fill="url(#wr)"/><rect x="500" y="115.7" width="1" height="9.3" fill="#ff8800"/><rect x="500" y="115.7" width="9" height="1" fill="#ff8800"/><rect x="500" y="127" width="1" height="4" fill="#707070"/><rect x="528" y="28.0" width="9" height="97.0" fill="url(#rd)"/><rect x="528" y="28.0" width="1" height="97.0" fill="#00c8ff"/><rect x="528" y="28.0" width="9" height="1" fill="#00c8ff"/><rect x="537" y="115.2" width="9" height="9.8" fill="url(#wr)"/><rect x="537" y="115.2" width="1" height="9.8" fill="#ff8800"/><rect x="537" y="115.2" width="9" height="1" fill="#ff8800"/><rect x="537" y="127" width="1" height="4" fill="#707070"/></svg><div style="position:absolute;top:534px;font-size:13px;line-height:13px;color:#000;white-space:nowrap;left:54.50px;">MB/s</div><div style="position:absolute;top:544px;font-size:13px;line-height:13px;color:#000;white-space:nowrap;left:-351.50px;width:400px;text-align:right;">250</div><div style="position:absolute;top:568px;font-size:13px;line-height:13px;color:#000;white-space:nowrap;left:-351.50px;width:400px;text-align:right;">200</div><div style="position:absolute;top:593px;font-size:13px;line-height:13px;color:#000;white-space:nowrap;left:-351.50px;width:400px;text-align:right;">150</div><div style="position:absolute;top:617px;font-size:13px;line-height:13px;color:#000;white-space:nowrap;left:-351.50px;width:400px;text-align:right;">100</div><div style="position:absolute;top:642px;font-size:13px;line-height:13px;color:#000;white-space:nowrap;left:-351.50px;width:400px;text-align:right;">50</div><div style="position:absolute;top:680px;font-size:13px;line-height:13px;color:#000;white-space:nowrap;left:-128.00px;width:400px;text-align:center;">0.5</div><div style="position:absolute;top:680px;font-size:13px;line-height:13px;color:#000;white-space:nowrap;left:-92.00px;width:400px;text-align:center;">1</div><div style="position:absolute;top:680px;font-size:13px;line-height:13px;color:#000;white-space:nowrap;left:-55.00px;width:400px;text-align:center;">2</div><div style="position:absolute;top:680px;font-size:13px;line-height:13px;color:#000;white-space:nowrap;left:-18.00px;width:400px;text-align:center;">4</div><div style="position:absolute;top:680px;font-size:13px;line-height:13px;color:#000;white-space:nowrap;left:19.00px;width:400px;text-align:center;">8</div><div style="position:absolute;top:680px;font-size:13px;line-height:13px;color:#000;white-space:nowrap;left:56.00px;width:400px;text-align:center;">16</div><div style="position:absolute;top:680px;font-size:13px;line-height:13px;color:#000;white-space:nowrap;left:93.00px;width:400px;text-align:center;">32</div><div style="position:absolute;top:680px;font-size:13px;line-height:13px;color:#000;white-space:nowrap;left:130.00px;width:400px;text-align:center;">64</div><div style="position:absolute;top:680px;font-size:13px;line-height:13px;color:#000;white-space:nowrap;left:167.00px;width:400px;text-align:center;">128</div><div style="position:absolute;top:680px;font-size:13px;line-height:13px;color:#000;white-space:nowrap;left:204.00px;width:400px;text-align:center;">256</div><div style="position:absolute;top:680px;font-size:13px;line-height:13px;color:#000;white-space:nowrap;left:241.00px;width:400px;text-align:center;">512</div><div style="position:absolute;top:680px;font-size:13px;line-height:13px;color:#000;white-space:nowrap;left:278.00px;width:400px;text-align:center;">1024</div><div style="position:absolute;top:680px;font-size:13px;line-height:13px;color:#000;white-space:nowrap;left:315.00px;width:400px;text-align:center;">2048</div><div style="position:absolute;top:680px;font-size:13px;line-height:13px;color:#000;white-space:nowrap;left:352.00px;width:400px;text-align:center;">4096</div><div style="position:absolute;top:680px;font-size:13px;line-height:13px;color:#000;white-space:nowrap;left:389.00px;width:400px;text-align:center;">8192</div><svg style="position:absolute;left:514px;top:536px;" width="9" height="10" viewBox="0 0 9 10"><defs><linearGradient id="lr" x1="0" y1="0" x2="1" y2="0"><stop offset="0" stop-color="#00c8ff"/><stop offset="1" stop-color="#006080"/></linearGradient></defs><rect x="0" y="0" width="9" height="10" fill="url(#lr)"/></svg><div style="position:absolute;top:534px;font-size:13px;line-height:13px;color:#000;white-space:nowrap;left:527.20px;">read</div><svg style="position:absolute;left:568px;top:536px;" width="9" height="10" viewBox="0 0 9 10"><defs><linearGradient id="lw" x1="0" y1="0" x2="1" y2="0"><stop offset="0" stop-color="#ff8800"/><stop offset="1" stop-color="#904000"/></linearGradient></defs><rect x="0" y="0" width="9" height="10" fill="url(#lw)"/></svg><div style="position:absolute;top:534px;font-size:13px;line-height:13px;color:#000;white-space:nowrap;left:581.00px;">write</div><div style="position:absolute;left:648px;top:178px;width:98px;height:26px;box-sizing:border-box;border:1px solid #3c9bf0;background:linear-gradient(#f0f0f0,#e5e5e5);"></div><div style="position:absolute;top:185px;font-size:13px;line-height:13px;color:#000;white-space:nowrap;left:497.00px;width:400px;text-align:center;">Start</div><div style="position:absolute;top:215px;font-size:13.2px;line-height:13.2px;color:#000;white-space:nowrap;left:647.60px;">Drive</div><div style="position:absolute;left:647px;top:235px;width:100px;height:24px;box-sizing:border-box;border:1px solid #acacac;background:linear-gradient(#f0f0f0,#e5e5e5);"></div><div style="position:absolute;top:241px;font-size:13px;line-height:13px;color:#000;white-space:nowrap;left:651.40px;">G:</div><svg style="position:absolute;left:730px;top:242.0px;" width="12" height="10" viewBox="0 0 12 10"><path d="M1 2 L6 7 L11 2" fill="none" stroke="#404040" stroke-width="1.9"/></svg><div style="position:absolute;top:271px;font-size:13px;line-height:13px;color:#000;white-space:nowrap;left:647.40px;">File length</div><div style="position:absolute;left:647px;top:299px;width:74px;height:24px;box-sizing:border-box;border:1px solid #acacac;background:#fff;"></div><div style="position:absolute;top:304px;font-size:13px;line-height:13px;color:#000;white-space:nowrap;left:650.10px;">500</div><div style="position:absolute;left:700px;top:301px;width:19px;height:20px;box-sizing:border-box;border:1px solid #acacac;background:linear-gradient(#f2f2f2,#e4e4e4);"></div><div style="position:absolute;left:701px;top:310.5px;width:17px;height:1px;background:#c4c4c4;"></div><svg style="position:absolute;left:700px;top:301px;" width="19" height="20" viewBox="0 0 19 20"><path d="M5.2 7.5 L9.5 3.0 L13.8 7.5 Z" fill="#111"/><path d="M5.2 12.5 L9.5 17.0 L13.8 12.5 Z" fill="#111"/></svg><div style="position:absolute;top:309px;font-size:13px;line-height:13px;color:#000;white-space:nowrap;left:723.30px;">MB</div><div style="position:absolute;top:347px;font-size:13.16px;line-height:13.16px;color:#000;white-space:nowrap;left:647.40px;">Data pattern</div><div style="position:absolute;left:647px;top:369px;width:100px;height:24px;box-sizing:border-box;border:1px solid #acacac;background:linear-gradient(#f0f0f0,#e5e5e5);"></div><div style="position:absolute;top:375px;font-size:13px;line-height:13px;color:#000;white-space:nowrap;left:650.70px;">Zero</div><svg style="position:absolute;left:730px;top:376.0px;" width="12" height="10" viewBox="0 0 12 10"><path d="M1 2 L6 7 L11 2" fill="none" stroke="#404040" stroke-width="1.9"/></svg><div style="position:absolute;top:561px;font-size:13px;line-height:13px;color:#000;white-space:nowrap;left:649.30px;">File length</div><div style="position:absolute;left:647px;top:585px;width:100px;height:24px;box-sizing:border-box;border:1px solid #acacac;background:linear-gradient(#f0f0f0,#e5e5e5);"></div><div style="position:absolute;top:591px;font-size:13px;line-height:13px;color:#000;white-space:nowrap;left:651.00px;">64 MB</div><svg style="position:absolute;left:730px;top:592.0px;" width="12" height="10" viewBox="0 0 12 10"><path d="M1 2 L6 7 L11 2" fill="none" stroke="#404040" stroke-width="1.9"/></svg><div style="position:absolute;top:627px;font-size:13px;line-height:13px;color:#000;white-space:nowrap;left:649.30px;">Delay</div><div style="position:absolute;left:649px;top:649px;width:72px;height:24px;box-sizing:border-box;border:1px solid #acacac;background:#fff;"></div><div style="position:absolute;top:654px;font-size:13px;line-height:13px;color:#000;white-space:nowrap;left:652.00px;">0</div><div style="position:absolute;left:726px;top:648px;width:20px;height:26px;box-sizing:border-box;border:1px solid #acacac;background:linear-gradient(#f2f2f2,#e4e4e4);"></div><div style="position:absolute;left:727px;top:660.5px;width:18px;height:1px;background:#c4c4c4;"></div><svg style="position:absolute;left:726px;top:648px;" width="20" height="26" viewBox="0 0 20 26"><path d="M5.7 9.0 L10.0 4.5 L14.3 9.0 Z" fill="#111"/><path d="M5.7 17.0 L10.0 21.5 L14.3 17.0 Z" fill="#111"/></svg>
</body></html>
